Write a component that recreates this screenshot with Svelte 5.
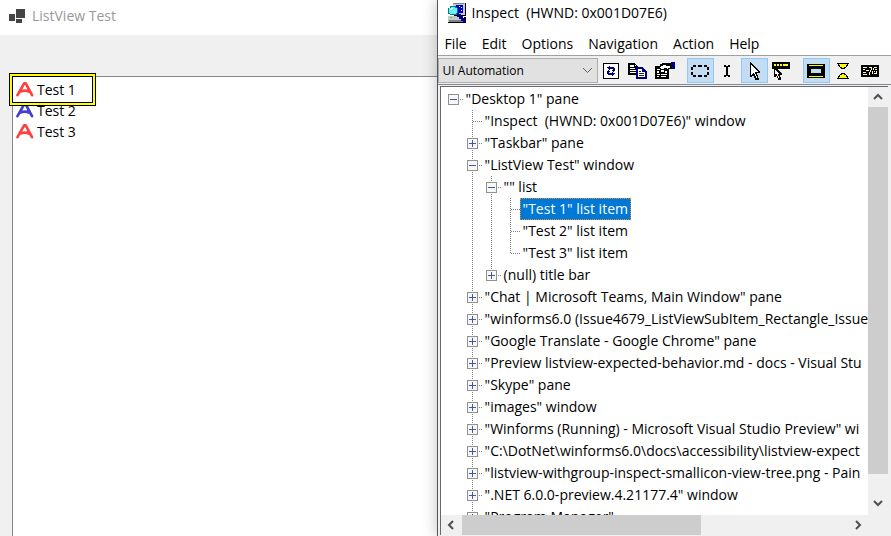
<script>
  const listItems = [
    { text: 'Test 1', color: '#ff4040' },
    { text: 'Test 2', color: '#4040cc' },
    { text: 'Test 3', color: '#ff4040' },
  ];

  const menus = ['File', 'Edit', 'Options', 'Navigation', 'Action', 'Help'];

  // guides: "|" passes through, "+" tee, "L" last child, one letter per level
  const rows = [
    { guides: 'r', box: '-', text: '"Desktop 1" pane' },
    { guides: ' +', box: '', text: '"Inspect  (HWND: 0x001D07E6)" window' },
    { guides: ' +', box: '+', text: '"Taskbar" pane' },
    { guides: ' +', box: '-', text: '"ListView Test" window' },
    { guides: ' |+', box: '-', text: '"" list' },
    { guides: ' ||+', box: '', text: '"Test 1" list item', selected: true },
    { guides: ' ||+', box: '', text: '"Test 2" list item' },
    { guides: ' ||L', box: '', text: '"Test 3" list item' },
    { guides: ' |L', box: '+', text: '(null) title bar' },
    { guides: ' +', box: '+', text: '"Chat | Microsoft Teams, Main Window" pane' },
    { guides: ' +', box: '+', text: '"winforms6.0 (Issue4679_ListViewSubItem_Rectangle_Issue' },
    { guides: ' +', box: '+', text: '"Google Translate - Google Chrome" pane' },
    { guides: ' +', box: '+', text: '"Preview listview-expected-behavior.md - docs - Visual Stu' },
    { guides: ' +', box: '+', text: '"Skype" pane' },
    { guides: ' +', box: '+', text: '"images" window' },
    { guides: ' +', box: '+', text: '"Winforms (Running) - Microsoft Visual Studio Preview" wi' },
    { guides: ' +', box: '+', text: '"C:\\DotNet\\winforms6.0\\docs\\accessibility\\listview-expect' },
    { guides: ' +', box: '+', text: '"listview-withgroup-inspect-smallicon-view-tree.png - Pain' },
    { guides: ' +', box: '+', text: '".NET 6.0.0-preview.4.21177.4" window' },
    { guides: ' +', box: '+', text: '"Program Manager"' },
  ];
</script>

{#snippet chevron(d)}
  <svg width="10" height="10" viewBox="0 0 10 10" aria-hidden="true"><path {d} fill="none" stroke="#505050" stroke-width="2" /></svg>
{/snippet}

<div class="desktop">
  <section class="app" aria-label="ListView Test">
    <header class="app-title">
      <svg width="16" height="14" viewBox="0 0 16 14" shape-rendering="crispEdges" aria-hidden="true">
        <path fill="#444" d="M7 0h9v9H7zM0 5h6v7H0zM7 10h6v4H7z" />
      </svg>
      <span>ListView Test</span>
    </header>
    <div class="app-body">
      <ul class="listview">
        {#each listItems as item}
          <li>
            <svg width="18" height="15" viewBox="0 0 18 15" aria-hidden="true">
              <path d="M1.5 13.2 L8 1.6 Q9 .8 10 1.8 L16 13.2 M4.5 9.5 Q9 7.6 13.5 9.8" fill="none" stroke={item.color} stroke-width="2.7" stroke-linecap="round" stroke-linejoin="round" />
            </svg>
            <span>{item.text}</span>
          </li>
        {/each}
      </ul>
      <div class="highlight"></div>
    </div>
  </section>

  <section class="inspect" aria-label="Inspect">
    <header class="title">
      <svg width="20" height="20" viewBox="0 0 20 20" shape-rendering="crispEdges" aria-hidden="true">
        <path fill="#c8c8c8" d="M6 0h12v12H6zM1 13h15v6H1z" />
        <path fill="#808080" d="M6 0h11v1H6zM2 17h14v2H2z" />
        <path fill="#000" d="M18 0h1v13h-1zM7 12h12v1H7zM1 19h18v1H1zM17 14h2v5h-2z" />
        <path fill="#0000c0" d="M9 2h7v8H9z" />
        <path fill="#fff" d="M12 3h1v1h-1zM14 4h1v1h-1zM14 7h1v1h-1z" />
        <path fill="#008080" d="M3 3h6v1h1v1h1v6h-1v1H3v-1H1V5h2z" />
        <path fill="#60f0f8" d="M4 4h4v1h2v5H9v1H3v-1H2V5h2z" />
        <path fill="#fff" d="M4 5h2v1H5v1H3V6h1zM7 8h1v1H7z" />
        <path fill="#000090" d="M10 10h2v1h2v2h2v2h2v2h1v3h-3v-2h-2v-2h-2v-2h-2z" />
        <path fill="#20f020" d="M3 14h2v1H3z" />
      </svg>
      <span>Inspect&nbsp; (HWND: 0x001D07E6)</span>
    </header>

    <nav class="menu">
      {#each menus as name}<button>{name}</button>{/each}
    </nav>

    <div class="toolbar">
      <div class="combo">
        <select aria-label="Mode"><option>UI Automation</option></select>
        <svg width="11" height="7" viewBox="0 0 11 7" aria-hidden="true"><path d="M1 1l4.5 4.5L10 1" fill="none" stroke="#606060" /></svg>
      </div>
      <div class="group">
        <button aria-label="Refresh">
          <svg width="20" height="18" viewBox="0 0 20 18" shape-rendering="crispEdges">
            <path fill="#000" d="M2 1h16v16H2z" /><path fill="#fff" d="M3 2h14v14H3z" />
            <path fill="#000080" d="M8 4h1v1h4v1h1v3h-1v1h-1V9h-1V8h1V7H9v1H8V7H7V6H6V5h2zM12 14h-1v-1H7v-1H6V9h1V8h1v1h1v1H8v1h3v-1h1v1h2v1h-1v1h-1z" />
          </svg>
        </button>
        <button aria-label="Copy">
          <svg width="20" height="18" viewBox="0 0 20 18" shape-rendering="crispEdges">
            <path fill="#000" d="M0 1h7v1h1v1h1v1h1v9H0z" /><path fill="#fff" d="M2 3h4v2H2zM2 6h5v1H2zM2 8h6v1H2zM2 10h6v1H2zM7 3h1v1H7z" />
            <path fill="#000080" d="M8 5h7v1h1v1h1v1h1v1h1v8H8z" /><path fill="#fff" d="M10 7h4v3h3v5h-7z" />
            <path fill="#000080" d="M14 7h1v2h2v1h-3z" /><path fill="#222" d="M11 9h2v1h-2zM11 11h5v1h-5zM11 13h5v1h-5z" />
          </svg>
        </button>
        <button aria-label="Properties">
          <svg width="20" height="18" viewBox="0 0 20 18" shape-rendering="crispEdges">
            <path fill="#000" d="M0 4h5V2h2V1h9v1h1v5h-3v10H0z" />
            <path fill="#fff" d="M6 4h2V3h3v1h4v2h-2v1h-1V6H9v1H6V6H5V5h1zM2 7h3v1H2zM2 9h2v2H2zM6 8h3v2H6zM2 12h3v1H2zM6 12h6v1H6zM2 14h2v1H2zM6 14h5v1H6zM10 9h2v2h-2z" />
            <path fill="#000080" d="M16 0h4v7h-3V3h-1z" />
          </svg>
        </button>
      </div>
      <div class="group">
        <button class="on" aria-label="Show highlight rectangle">
          <svg width="20" height="18" viewBox="0 0 20 18" shape-rendering="crispEdges">
            <path fill="#000" d="M3 3h3v2H3zM8 3h4v2H8zM14 3h3v2h-3zM3 13h3v2H3zM8 13h4v2H8zM14 13h3v2h-3zM1 5h2v3H1zM1 10h2v3H1zM17 5h2v3h-2zM17 10h2v3h-2z" />
          </svg>
        </button>
        <button aria-label="Watch caret">
          <svg width="20" height="18" viewBox="0 0 20 18" shape-rendering="crispEdges">
            <path fill="#000" d="M7 3h2v1h2V3h2v2h-2v8h2v2h-2v-1H9v1H7v-2h2V5H7z" />
          </svg>
        </button>
        <button class="on" aria-label="Watch cursor">
          <svg width="20" height="18" viewBox="0 0 20 18" shape-rendering="crispEdges">
            <path fill="#000" d="M6 0h1v1h1v1h1v1h1v1h1v1h1v1h1v1h1v1h1v1h1v2h-3v2h1v3h1v2h-4v-2h-1v-2h-1v-1H9v1H8v1H6z" />
            <path fill="#fff" d="M7 3h1v1h1v1h1v1h1v1h1v1h1v1h1v1h-3v2h1v2h1v2h-1v-2h-1v-2h-1v-1H9v1H8v1H7z" />
          </svg>
        </button>
        <button aria-label="Watch tooltips">
          <svg width="20" height="18" viewBox="0 0 20 18" shape-rendering="crispEdges">
            <path fill="#000" d="M1 0h18v7H1z" /><path fill="#ffff00" d="M3 2h2v2H3zM6 2h2v2H6zM9 2h2v2H9zM12 2h5v2h-5z" />
            <path fill="#000" d="M3 5h2v1h1v1h1v1h1v1h1v1h1v1h1v2H9v2h1v3H7v-2H6v-2H5v1H3z" />
            <path fill="#fff" d="M4 8h1v1h1v1h1v1h1v1H7v2h1v2H7v-2H6v-2H4z" />
          </svg>
        </button>
      </div>
      <div class="group">
        <button class="on" aria-label="Always on top">
          <svg width="20" height="18" viewBox="0 0 20 18" shape-rendering="crispEdges">
            <path fill="#000" d="M1 2h18v14H1z" /><path fill="#ffff00" d="M3 3h14v1H3zM3 14h14v1H3z" /><path fill="#c1dcf3" d="M5 7h10v4H5z" />
          </svg>
        </button>
        <button aria-label="Show information">
          <svg width="20" height="18" viewBox="0 0 20 18" shape-rendering="crispEdges">
            <path fill="#000" d="M4 1h12v1h-1v2h-1v1h-1v1h-1v1H8V6H7V5H6V4H5V2H4zM8 11h4v1h1v1h1v1h1v2h1v1H4v-1h1v-2h1v-1h1v-1h1z" />
            <path fill="#ffff00" d="M6 2h8v1h-1v2h-2v1H9V5H7V3H6zM9 12h2v1h2v2h1v1H6v-1h1v-2h2z" />
          </svg>
        </button>
        <button aria-label="Show properties">
          <svg width="20" height="18" viewBox="0 0 20 18" shape-rendering="crispEdges">
            <path fill="#000" d="M1 3h18v12H1z" />
            <path fill="#fffbb0" d="M3 5h4v1H3zM3 7h2v1H3zM6 8h3v1H6zM3 10h3v1H3zM3 12h4v1H3zM9 5h3v1H9zM11 6h1v2h-1zM10 8h1v2h-1zM9 10h1v3H9zM14 5h3v1h-3zM13 6h1v2h-1zM15 7h2v1h-2zM12 9h1v3h-1zM14 9h1v1h-1zM14 11h3v1h-3zM16 9h1v2h-1z" />
          </svg>
        </button>
      </div>
    </div>

    <div class="tree-frame">
      <div class="tree" role="tree">
        {#each rows as row}
          <div class="row" role="treeitem" aria-selected={!!row.selected}>
            {#each row.guides as g, i}
              <span class="cell" class:through={g === '|' || g === '+'} class:last={g === 'L'} class:own={i === row.guides.length - 1}>
                {#if i === row.guides.length - 1 && row.box}
                  <svg width="11" height="11" viewBox="0 0 11 11" shape-rendering="crispEdges" aria-hidden="true">
                    <path fill="#919191" d="M0 0h11v11H0z" /><path fill="#f7f7f7" d="M1 1h9v9H1z" />
                    <path fill="#3c5aa0" d={row.box === '+' ? 'M2 5h7v1H2zM5 2h1v7H5z' : 'M2 5h7v1H2z'} />
                  </svg>
                {/if}
              </span>
            {/each}
            <span class="label" class:selected={row.selected}>{row.text}</span>
          </div>
        {/each}
      </div>
      <div class="vscroll">
        <button aria-label="Scroll up">{@render chevron('M1 7l4-4 4 4')}</button>
        <div class="track"><div class="thumb"></div></div>
        <button aria-label="Scroll down">{@render chevron('M1 3l4 4 4-4')}</button>
      </div>
      <div class="hscroll">
        <button aria-label="Scroll left">{@render chevron('M7 1L3 5l4 4')}</button>
        <div class="track"><div class="thumb"></div></div>
        <button aria-label="Scroll right">{@render chevron('M3 1l4 4-4 4')}</button>
      </div>
    </div>
  </section>
</div>

<style>
  :global(body) { margin: 0; overflow: hidden; }
  .desktop {
    display: grid;
    grid-template-columns: 49fr 51fr;
    height: 100vh;
    font: 14px/22px "Open Sans", "Noto Sans", sans-serif;
    color: #000;
    overflow: hidden;
  }
  button { font: inherit; color: inherit; border: 0; padding: 0; background: none; }
  svg { display: block; flex: none; }

  .app { display: flex; flex-direction: column; min-width: 0; background: #f0f0f0; }
  .app-title {
    display: flex; align-items: center; gap: 7px;
    height: 35px; padding: 0 9px 4px; box-sizing: border-box;
    background: #fff; color: #999;
  }
  .app-body { position: relative; flex: 1; display: flex; padding: 41px 0 0 12px; }
  .listview {
    flex: 1; margin: 0; padding: 2px 3px; list-style: none;
    background: #fff; border: solid #828790; border-width: 1px 0 0 1px;
  }
  .listview li { display: flex; align-items: center; gap: 3px; height: 21px; }
  .highlight {
    position: absolute; left: 9px; top: 38px; width: 79px; height: 25px;
    border: 1px solid #000; margin: 3px;
    box-shadow: 0 0 0 2px #ff0, 0 0 0 3px #000;
  }

  .inspect {
    display: flex; flex-direction: column; min-width: 0; min-height: 0;
    background: #f0f0f0; border-left: 1px solid #555;
    box-shadow: 0 0 14px rgba(0, 0, 0, .25); z-index: 1;
  }
  .title { display: flex; align-items: center; gap: 5px; height: 30px; padding: 0 9px 5px; box-sizing: border-box; background: #fff; }
  .menu { display: flex; gap: 15px; height: 26px; padding: 3px 7px 0; box-sizing: border-box; background: #fff; border-bottom: 1px solid #a0a0a0; }
  .menu button { height: 22px; }

  .toolbar { display: flex; height: 29px; padding-top: 2px; box-sizing: border-box; border-bottom: 1px solid #828790; gap: 8px; }
  .combo { position: relative; flex: 0 0 160px; height: 25px; margin-right: -8px; }
  .combo select {
    appearance: none; width: 100%; height: 100%; padding: 0 4px; box-sizing: border-box;
    border: 1px solid #adadad; border-radius: 0; background: #e1e1e1;
    font: 12px/20px "Open Sans", "Noto Sans", sans-serif; color: #000;
  }
  .combo svg { position: absolute; right: 5px; top: 9px; pointer-events: none; }
  .group { display: flex; }
  .group button { display: grid; place-items: center; width: 27px; height: 25px; box-sizing: border-box; border: 1px solid transparent; }
  .group .on { background: #c1dcf3; border-color: #90c8f6; }

  .tree-frame {
    flex: 1; min-height: 0; display: grid;
    grid-template: minmax(0, 1fr) 20px / minmax(0, 1fr) 20px;
    margin: 1px 3px 1px 2px; border: solid #646870; border-width: 1px 0 0 1px;
    background: #f0f0f0;
  }
  .tree { overflow: hidden; padding: 1px 0 0 3px; background: #fff; }
  .row { display: flex; height: 22px; white-space: pre; }
  .cell { flex: none; display: grid; place-items: center; width: 19px; height: 22px; background-repeat: no-repeat; --dots-v: repeating-linear-gradient(#808080 0 1px, transparent 1px 2px); --dots-h: repeating-linear-gradient(90deg, #808080 0 1px, transparent 1px 2px); }
  .through { background-image: var(--dots-v); background-size: 1px 22px; background-position: 9px 0; }
  .own { background-image: var(--dots-h); background-size: 9px 1px; background-position: 10px 11px; }
  .own.through { background-image: var(--dots-v), var(--dots-h); background-size: 1px 22px, 9px 1px; background-position: 9px 0, 10px 11px; }
  .own.last { background-image: var(--dots-v), var(--dots-h); background-size: 1px 12px, 9px 1px; background-position: 9px 0, 10px 11px; }
  .label { padding: 0 3px; }
  .selected { background: #0078d7; color: #fff; outline: 1px dotted #e88a28; outline-offset: -1px; }

  .vscroll { display: flex; flex-direction: column; padding-bottom: 2px; }
  .vscroll button { height: 20px; }
  .hscroll { display: flex; }
  .hscroll button { width: 21px; }
  .vscroll button, .hscroll button { display: grid; place-items: center; flex: none; }
  .track { flex: 1; }
  .thumb { background: #cdcdcd; }
  .vscroll .thumb { height: 95%; }
  .hscroll .thumb { width: 62%; height: 100%; }
</style>
